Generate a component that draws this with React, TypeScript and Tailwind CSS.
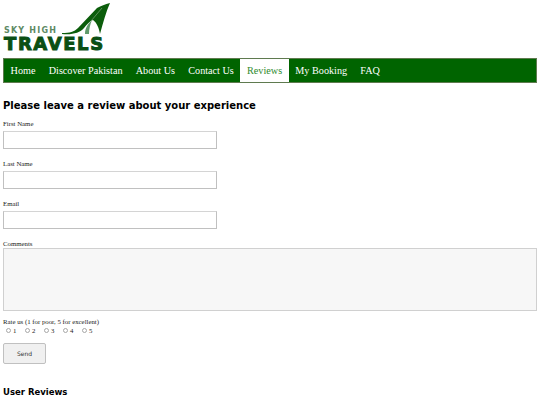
import React from 'react';

const links = ['Home', 'Discover Pakistan', 'About Us', 'Contact Us', 'Reviews', 'My Booking', 'FAQ'];
const fields = ['First Name', 'Last Name', 'Email'];
const rates = ['1', '2', '3', '4', '5'];

const Logo = () => (
  <div className="relative h-[52px] w-[115px]">
    <svg className="absolute -left-[3px] -top-[3px]" width="115" height="40" viewBox="0 0 115 40">
      <path d="M62 33 C70 33 74 32 78 28 L97 8 C101 6 105 4 110 3 C106 12 103 23 100 34 C99 28 97 23 93 20 C90 21 87 24 84 28 C80 33 72 35 62 34 Z" fill="#0b5d0b" />
      <path d="M85 34 C85 28 88 24 92 20 C90 25 89 29 89 34 Z" fill="#5f9a6a" />
      <path d="M91 21 L102 8" stroke="#8fb08f" strokeWidth="0.6" fill="none" />
    </svg>
    <span className="absolute left-px top-[25px] font-['DejaVu_Sans'] text-[8px] leading-[6px] font-bold tracking-[1.2px] whitespace-nowrap text-[#5e8a64]">SKY HIGH</span>
    <span className="absolute left-px top-[34px] font-['DejaVu_Sans'] text-[18px] leading-[14px] font-bold tracking-[1.6px] whitespace-nowrap text-[#0b4f14] [-webkit-text-stroke:1px_#0b4f14]">TRAVELS</span>
  </div>
);

export default function App() {
  return (
    <div className="h-[405px] overflow-hidden bg-white px-[3px] pt-[3px] font-['Liberation_Serif',serif] text-black">
      <Logo />
      <nav className="mt-[3px] flex h-[25px] w-[534px] border border-[#5f7a4f] bg-[#006400]">
        {links.map((link) => (
          <a
            key={link}
            className={
              link === 'Reviews'
                ? 'flex h-full items-center bg-white px-[6.6px] text-[10.2px] text-[#2e8b2e]'
                : 'flex h-full items-center px-[6.6px] text-[10.2px] text-white'
            }
          >
            {link}
          </a>
        ))}
      </nav>

      <h2 className="mt-[15px] font-['DejaVu_Sans',sans-serif] text-[10px] leading-[16px] font-bold">
        Please leave a review about your experience
      </h2>

      <form className="mt-[4px]">
        {fields.map((field) => (
          <div key={field} className="mb-[9px]">
            <label className="block h-[12px] text-[6.8px] leading-[12px] text-[#222]">{field}</label>
            <input className="mt-px block h-[18px] w-[214px] border border-[#c0c0c0] border-t-[#d4d4d4] bg-white" />
          </div>
        ))}
        <label className="mt-[10px] block h-[9px] text-[6.8px] leading-[9px] text-[#222]">Comments</label>
        <textarea className="block h-[63px] w-[534px] resize-none border border-[#d0d0d0] bg-[#f7f7f7]" />

        <div className="mt-[7px] text-[6.8px] leading-[8px] text-[#222]">Rate us (1 for poor, 5 for excellent)</div>
        <div className="flex h-[9px] items-center pl-[3px] text-[6.8px] leading-[9px] text-[#222]">
          {rates.map((rate) => (
            <span key={rate} className="flex w-[19px] items-center gap-[2px]">
              <span className="h-[5px] w-[5px] rounded-full border-[0.5px] border-[#a8a8a8] bg-white" />
              {rate}
            </span>
          ))}
        </div>
        <button
          type="button"
          className="mt-[8px] block h-[21px] w-[43px] rounded-[2px] border border-[#c0c0c0] bg-[#f0f0f0] font-['DejaVu_Sans',sans-serif] text-[6px] text-[#333]"
        >
          Send
        </button>
      </form>

      <h3 className="mt-[22px] font-['DejaVu_Sans',sans-serif] text-[8.5px] leading-[12px] font-bold">User Reviews</h3>
    </div>
  );
}
